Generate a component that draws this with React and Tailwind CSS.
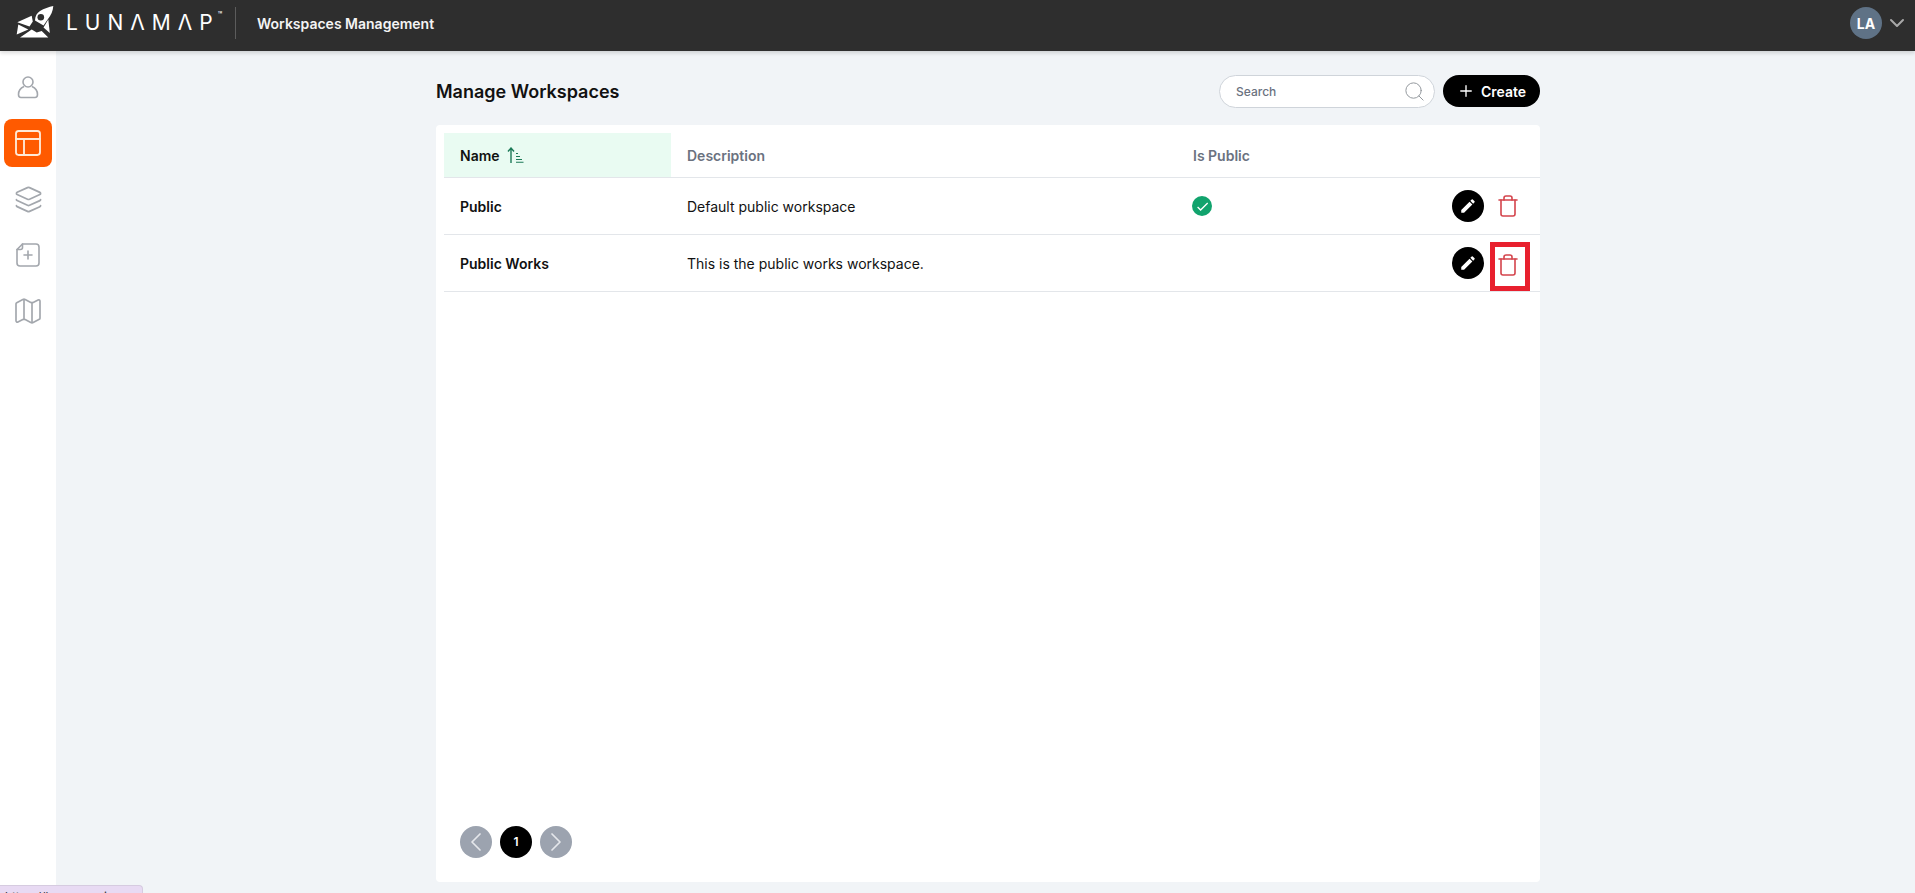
import React from "react";
import { ChevronDown, ChevronLeft, ChevronRight, Layers, Map as MapIcon, PanelsTopLeft, Plus, Search, Trash } from "lucide-react";
import { MdEdit, MdCheck } from "react-icons/md";

function Logo() {
  return (
    <svg viewBox="0 0 40 34" className="w-[40px] h-[34px] shrink-0" fill="#fff">
      <path d="M37.3 0 C37 5 35 9 32 13 L27.5 19.5 L19 14.5 C19 10 21 7 24 5 C28 2.5 33 1 37.3 0Z" />
      <circle cx="24.8" cy="11.3" r="3.3" fill="#2e2e2e" />
      <path d="M1.3 16.3 L15.7 9.7 L16.8 15.5 L13.5 20.5 Z" />
      <path d="M0.7 28.5 L2.3 18.5 L12.3 23.5 Z" />
      <path d="M4 31.5 L15.7 23.5 L20.7 26.5 L25.7 25 L32.3 31.5 Z" />
      <path d="M33.8 27 L32.3 13.5 L27.5 21.5 Z" />
    </svg>
  );
}

function UserIcon() {
  return (
    <svg viewBox="0 0 24 24" className="w-[24px] h-[24px]" fill="none" stroke="#a3a7ad" strokeWidth="1.6">
      <circle cx="12" cy="7" r="5" />
      <path d="M8 11.5 C4.5 13 2.5 16.5 2.5 19.5 C2.5 21.5 3.5 22.5 5 22.5 H19 C20.5 22.5 21.5 21.5 21.5 19.5 C21.5 16.5 19.5 13 16 11.5" />
    </svg>
  );
}

function NewDocIcon() {
  return (
    <svg viewBox="0 0 24 24" className="w-[24px] h-[24px]" fill="none" stroke="#a3a7ad" strokeWidth="1.6" strokeLinecap="round" strokeLinejoin="round">
      <path d="M6.5 1 H20 C21.7 1 23 2.3 23 4 V20 C23 21.7 21.7 23 20 23 H4 C2.3 23 1 21.7 1 20 V6.5 Z" />
      <path d="M6.5 1 V4.5 C6.5 5.6 5.6 6.5 4.5 6.5 H1" />
      <path d="M12 8 V16 M8 12 H16" />
    </svg>
  );
}

function SortIcon() {
  return (
    <svg viewBox="0 0 17 16" className="w-[17px] h-[16px]" fill="none" stroke="#1c7a58" strokeWidth="1.4">
      <path d="M4 16 V1 M1 4.5 L4 1 L7 4.5" />
      <path d="M9 6.5 H11 M9 9.5 H13 M9 12.5 H15 M9 15.3 H16.5" strokeWidth="1.1" />
    </svg>
  );
}

function NavItem({ active, children }) {
  return (
    <div className={active ? "w-[48px] h-[48px] rounded-lg bg-[#ff5a00] text-[#ffe9d6] flex items-center justify-center" : "w-[48px] h-[48px] text-[#a3a7ad] flex items-center justify-center"}>
      {children}
    </div>
  );
}

function ActionCell({ marked }) {
  return (
    <div className="flex items-center gap-[6px] pr-[10px]">
      <button className="w-[32px] h-[32px] rounded-full bg-black text-white flex items-center justify-center">
        <MdEdit size={18} />
      </button>
      <div className={marked ? "w-[40px] h-[49px] mt-[3px] -mb-[3px] pr-[4px] pb-[3px] border-[5px] border-[#e8202e] flex items-center justify-center" : "w-[40px] h-[40px] pr-[4px] flex items-center justify-center"}>
        <Trash size={24} strokeWidth={1.6} className="text-[#d4444c] shrink-0" />
      </div>
    </div>
  );
}

function Row({ name, desc, pub, marked }) {
  return (
    <div className="ml-[8px] h-[57px] shrink-0 border-b border-[#e3e6ea] flex items-center text-[14px] text-[#111]">
      <div className="w-[227px] pl-[16px] font-semibold">{name}</div>
      <div className="w-[506px] pl-[16px]">{desc}</div>
      <div className="flex-1 pl-[15px]">
        {pub && (
          <span className="w-[20px] h-[20px] rounded-full bg-[#11a36d] text-white flex items-center justify-center">
            <MdCheck size={15} />
          </span>
        )}
      </div>
      <ActionCell marked={marked} />
    </div>
  );
}

export default function App() {
  return (
    <div className="relative h-screen overflow-hidden flex flex-col bg-[#f1f4f7] font-['Inter',sans-serif]">
      <header className="h-[51px] shrink-0 bg-[#2e2e2e] flex items-center pl-[16px] pr-[6px] pb-[5px] shadow-[0_2px_4px_rgba(0,0,0,0.15)] z-10">
        <Logo />
        <div className="ml-[10px] w-[169px] flex items-start text-white">
          <span className="text-[21px] leading-[26px] font-normal tracking-[7px]">LUNΛMΛP</span>
          <span className="text-[7px] leading-[10px] font-semibold -ml-[2px]">™</span>
        </div>
        <div className="w-px h-[32px] bg-[#5c5c5c]" />
        <div className="ml-[21px] text-[14px] font-semibold text-[#f4f4f4]">Workspaces Management</div>
        <div className="ml-auto flex items-center gap-[3px]">
          <div className="w-[32px] h-[32px] rounded-full bg-[#5f7286] text-white text-[14px] font-bold flex items-center justify-center">LA</div>
          <ChevronDown size={24} strokeWidth={2} className="text-[#a8a8a8]" />
        </div>
      </header>
      <div className="flex-1 flex min-h-0">
        <aside className="w-[56px] shrink-0 bg-white flex flex-col items-center gap-[8px] pt-[12px]">
          <NavItem><UserIcon /></NavItem>
          <NavItem active><PanelsTopLeft size={32} strokeWidth={1.4} /></NavItem>
          <NavItem><Layers size={29} strokeWidth={1.4} /></NavItem>
          <NavItem><NewDocIcon /></NavItem>
          <NavItem><MapIcon size={32} strokeWidth={1.25} /></NavItem>
        </aside>
        <main className="w-[1104px] ml-[380px] flex flex-col pb-[11px]">
          <div className="h-[74px] shrink-0 flex items-center justify-between pt-[6px]">
            <h1 className="text-[18px] font-semibold text-[#111]">Manage Workspaces</h1>
            <div className="flex items-center gap-[8px]">
              <div className="w-[216px] h-[33px] rounded-full bg-white border border-[#cfd4da] flex items-center pl-[16px] pr-[8px] text-[12px] font-medium text-[#6b7280]">
                <span className="flex-1 pt-[2px]">Search</span>
                <Search size={23} strokeWidth={1} className="text-[#8f949a]" />
              </div>
              <button className="w-[97px] h-[32px] rounded-full bg-black text-white text-[14px] font-semibold flex items-center justify-center gap-[6px]">
                <Plus size={18} strokeWidth={1.8} />Create
              </button>
            </div>
          </div>
          <section className="flex-1 min-h-0 bg-white rounded-[4px] flex flex-col pt-[8px]">
            <div className="ml-[8px] h-[45px] shrink-0 border-b border-[#e3e6ea] flex items-stretch text-[14px] font-semibold text-[#6b7280]">
              <div className="w-[227px] pl-[16px] bg-[#e9fbf2] text-[#111] flex items-center gap-[7px]">Name <SortIcon /></div>
              <div className="w-[506px] pl-[16px] flex items-center">Description</div>
              <div className="pl-[16px] flex items-center">Is Public</div>
            </div>
            <Row name="Public" desc="Default public workspace" pub />
            <Row name="Public Works" desc="This is the public works workspace." marked />
            <div className="mt-auto pl-[24px] pb-[24px] flex items-center gap-[8px]">
              <button className="w-[32px] h-[32px] rounded-full bg-[#9ca3af] text-[#e5e7eb] flex items-center justify-center"><ChevronLeft size={32} strokeWidth={1.3} className="shrink-0" /></button>
              <button className="w-[32px] h-[32px] rounded-full bg-black text-white text-[12px] font-semibold flex items-center justify-center">1</button>
              <button className="w-[32px] h-[32px] rounded-full bg-[#9ca3af] text-[#e5e7eb] flex items-center justify-center"><ChevronRight size={32} strokeWidth={1.3} className="shrink-0" /></button>
            </div>
          </section>
        </main>
      </div>
      <div className="absolute left-0 top-[885px] w-[143px] h-[20px] rounded-tr-[4px] bg-[#e8daf3] border-t border-r border-[#d6cbe0] pl-[5px] pt-[3px] text-[12px] leading-[16px] text-[#333] overflow-hidden whitespace-nowrap">https://lunamap.ai</div>
    </div>
  );
}
